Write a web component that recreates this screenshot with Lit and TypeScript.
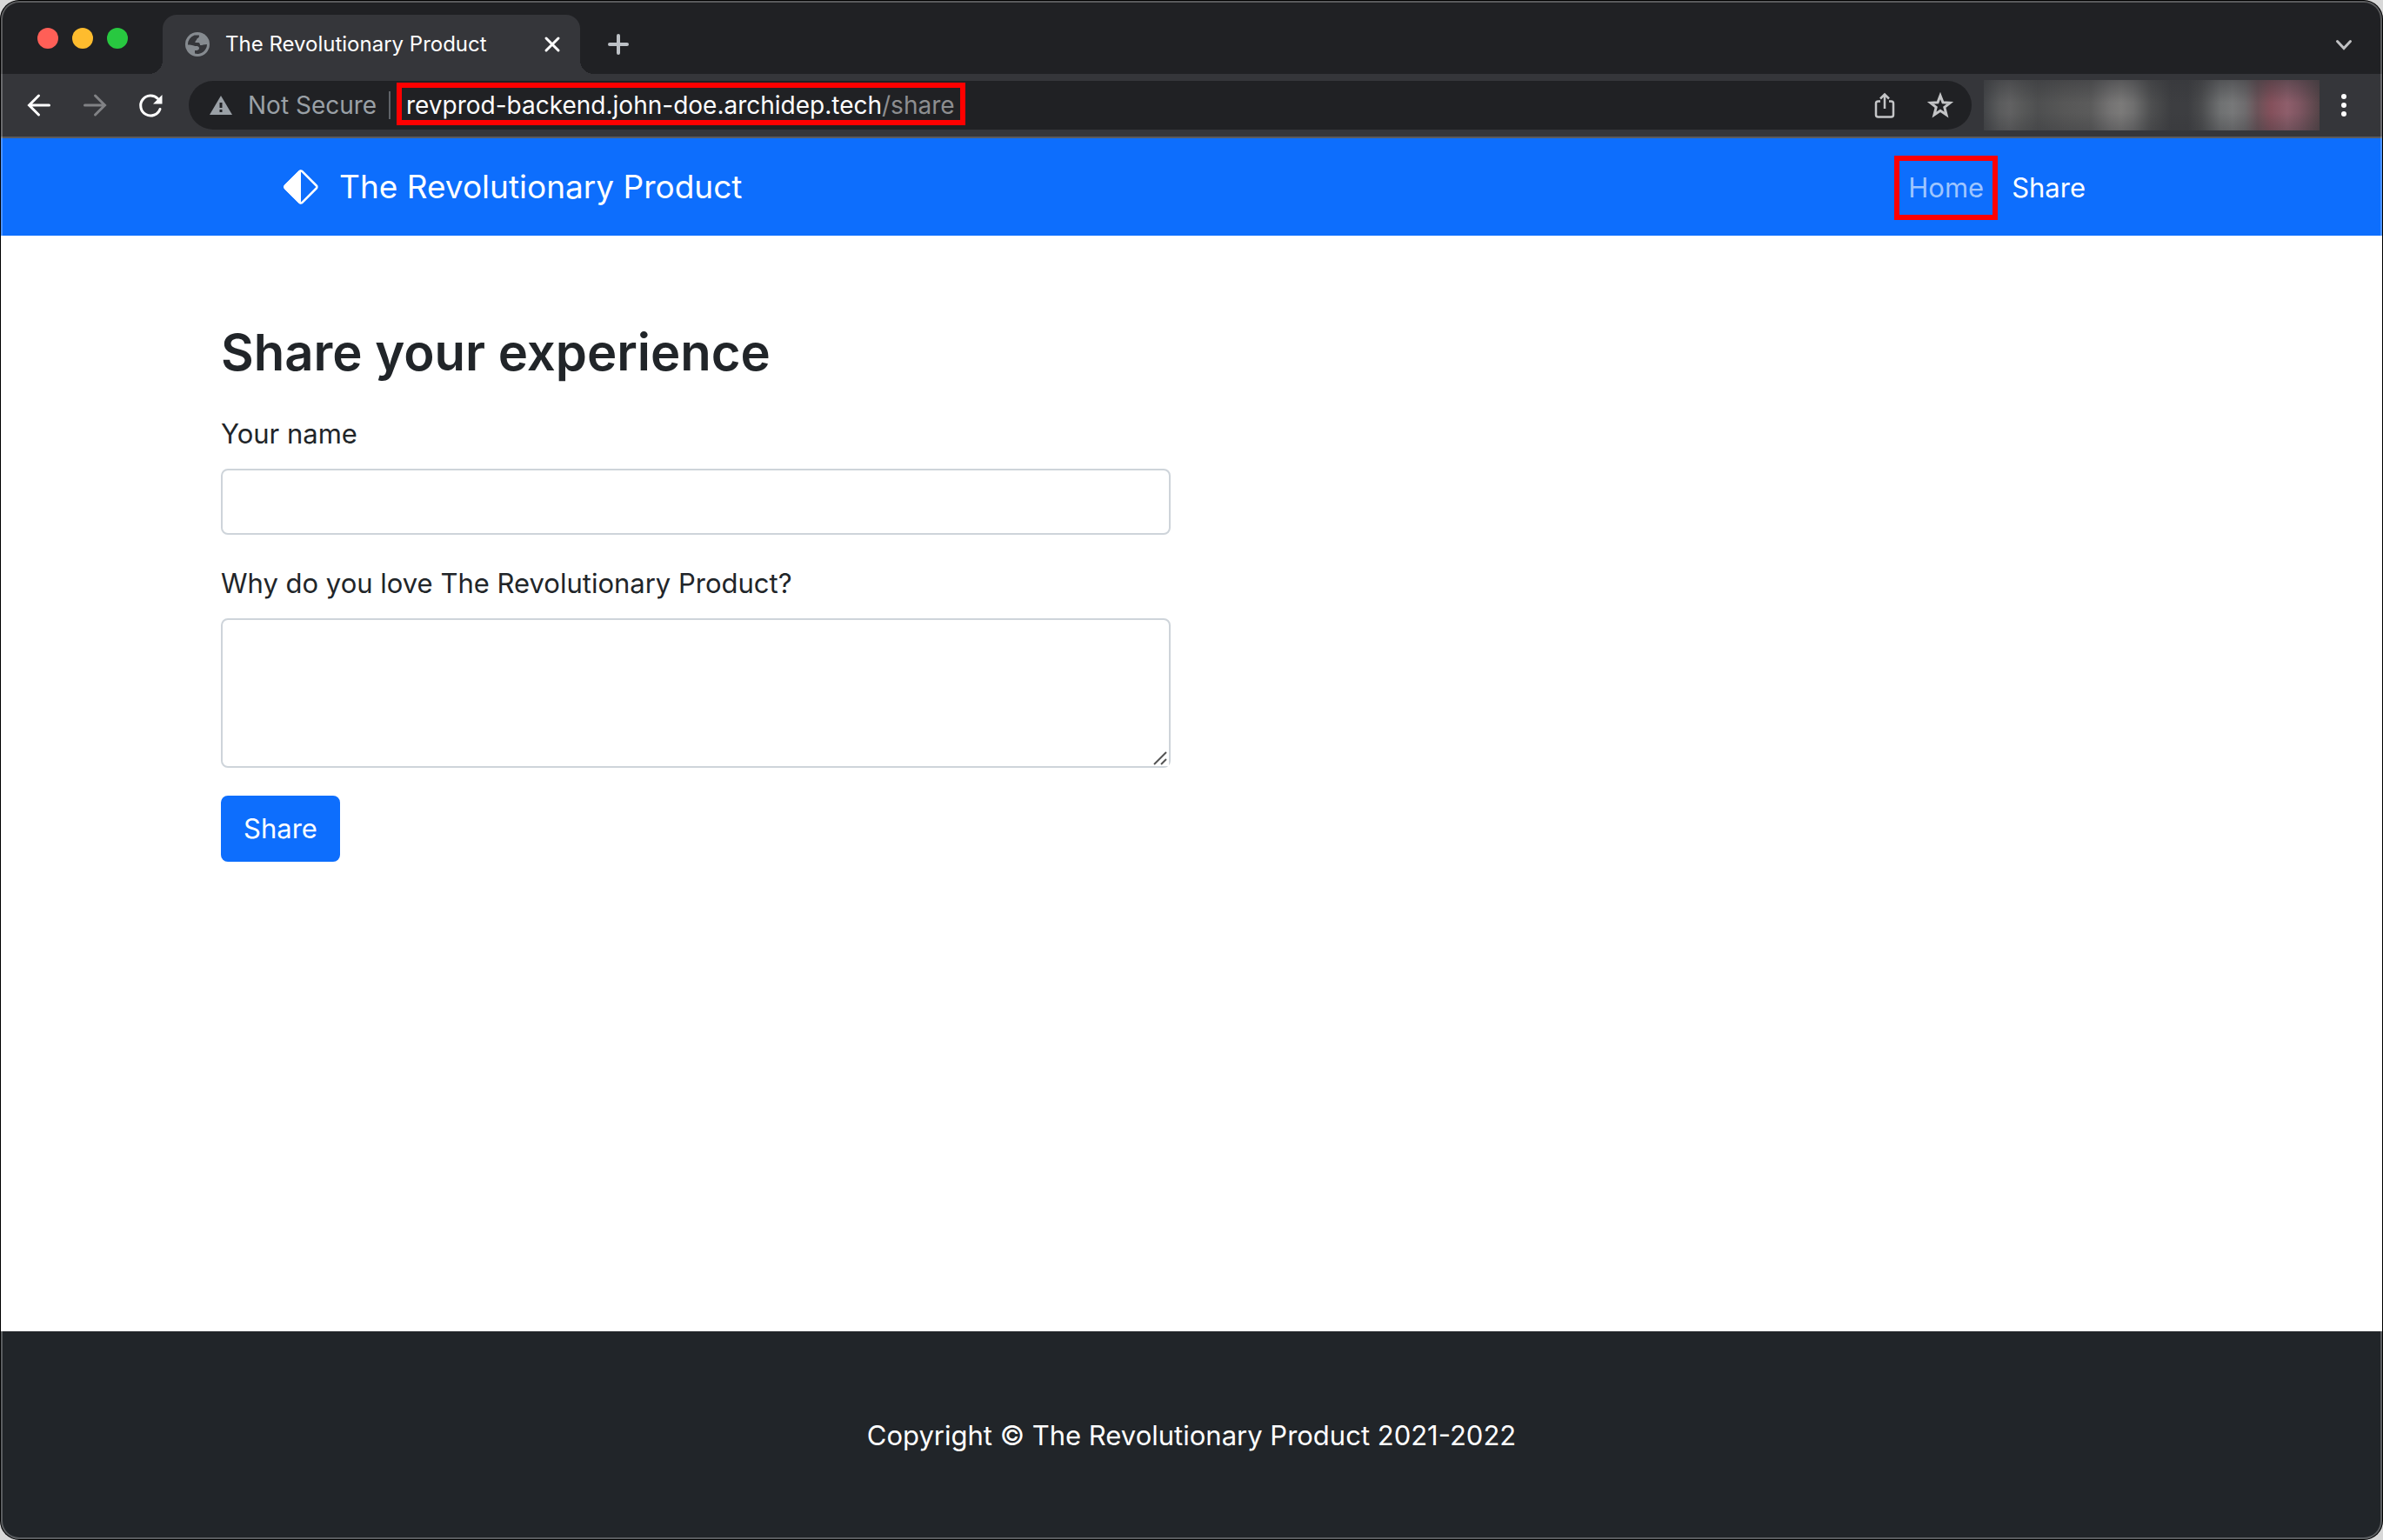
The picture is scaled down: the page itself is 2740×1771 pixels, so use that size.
import { LitElement, html, css, svg } from "lit";
import { customElement } from "lit/decorators.js";

const stroke = (d: string, w = 3) =>
  svg`<path d=${d} fill="none" stroke="currentColor" stroke-width=${w} stroke-linecap="round" />`;

@customElement("browser-chrome")
export class BrowserChrome extends LitElement {
  static styles = css`
    :host {
      display: block;
      color: #fff;
    }
    svg {
      display: block;
      flex: none;
    }
    button {
      appearance: none;
      border: 0;
      padding: 0;
      margin: 0;
      background: none;
      color: inherit;
      font: inherit;
      flex: none;
    }
    .strip {
      display: flex;
      align-items: flex-end;
      height: 85px;
      box-sizing: border-box;
      padding: 3px 29px 0 43px;
      background: #202124;
    }
    .lights {
      display: flex;
      gap: 16px;
      align-self: flex-start;
      padding-top: 29px;
      margin-right: 40px;
    }
    .light {
      width: 24px;
      height: 24px;
      border-radius: 50%;
    }
    .red {
      background: #ff5f57;
    }
    .yellow {
      background: #febc2e;
    }
    .green {
      background: #28c840;
    }
    .tab {
      position: relative;
      display: flex;
      align-items: center;
      width: 480px;
      height: 68px;
      box-sizing: border-box;
      padding: 0 20px 0 26px;
      background: #35363a;
      border-radius: 16px 16px 0 0;
      font-size: 24px;
      line-height: 32px;
    }
    .tab::before,
    .tab::after {
      content: "";
      position: absolute;
      bottom: 0;
      width: 16px;
      height: 16px;
    }
    .tab::before {
      right: 100%;
      background: radial-gradient(circle at 0 0, transparent 16px, #35363a 16px);
    }
    .tab::after {
      left: 100%;
      background: radial-gradient(circle at 100% 0, transparent 16px, #35363a 16px);
    }
    .tab-title {
      flex: 1;
      margin-left: 18px;
      white-space: nowrap;
    }
    .new-tab {
      height: 68px;
      display: flex;
      align-items: center;
      margin-left: 30px;
      color: #bdc1c6;
    }
    .tab-search {
      height: 68px;
      display: flex;
      align-items: center;
      margin-left: auto;
      color: #c0c1c3;
    }
    .toolbar {
      display: flex;
      align-items: center;
      height: 74px;
      box-sizing: border-box;
      padding: 0 27px 0 29px;
      background: #35363a;
      border-bottom: 2px solid #5b5c5f;
    }
    .history {
      display: flex;
      gap: 32px;
      margin-right: 28px;
    }
    .disabled {
      color: #818285;
    }
    .omnibox {
      flex: 1;
      display: flex;
      align-items: center;
      height: 56px;
      box-sizing: border-box;
      padding: 0 20px 0 24px;
      border-radius: 28px;
      background: #202124;
      font-size: 28px;
      line-height: 34px;
      white-space: nowrap;
    }
    .insecure {
      margin-left: 18px;
      color: #9aa0a6;
    }
    .grey {
      color: #9aa0a6;
    }
    .divider {
      width: 2px;
      height: 32px;
      margin: 0 7px 0 auto;
      background: #5f6368;
    }
    .security {
      display: flex;
      align-items: center;
      width: 215px;
    }
    .address {
      display: block;
      width: 654px;
      box-sizing: border-box;
      margin-bottom: 3px;
      padding: 3px 5px 0;
      border: 6px solid #f00;
      color: #fff;
      text-decoration: none;
    }
    .path {
      color: #8d8e90;
    }
    .actions {
      display: flex;
      gap: 34px;
      margin-left: auto;
      color: #c4c5c7;
    }
    .extensions {
      width: 386px;
      height: 58px;
      margin: 0 14px;
      background:
        linear-gradient(#35363a80, #35363a00 45%, #35363a00 65%, #35363a50),
        linear-gradient(
          90deg,
          #434548,
          #5a5b5c 18px,
          #616162 30px,
          #585959 44px,
          #4e4f50 62px,
          #575757 93px,
          #5b5b5b 123px,
          #747373 145px,
          #7b7a79 158px,
          #6f6f6f 172px,
          #4e4f50 192px,
          #3d3e41 215px,
          #3d3e41 235px,
          #4a4b4d 250px,
          #6f7172 272px,
          #777879 286px,
          #6e6c6e 300px,
          #6b5258 315px,
          #84505b 330px,
          #8e5e6b 349px,
          #7f5662 362px,
          #554448
        );
    }
  `;

  render() {
    return html`
      <div class="strip">
        <div class="lights">
          <span class="light red"></span>
          <span class="light yellow"></span>
          <span class="light green"></span>
        </div>
        <div class="tab">
          <svg width="28" height="28" viewBox="0 0 28 28" aria-hidden="true">
            <circle cx="14" cy="14" r="14" fill="#868b90" />
            <path
              d="M3 14.5A11 11 0 0 1 10.500 3.600H16c0 2-.5 3.400-2.500 3.900C13 10 11 10 11.500 12h3.500c1.500 0 2 1.500 2 3 2 .5 4-1 8-1a11 11 0 0 1-14 10.500V21c3 0 5-.5 5-2.500s-1.500-2.500-4-2.500C10 16 9 14.500 3 14.500z"
              fill="#35363a"
            />
          </svg>
          <span class="tab-title">The Revolutionary Product</span>
          <button aria-label="Close tab">
            <svg width="24" height="24" viewBox="0 0 24 24">${stroke("M5 5 19 19M19 5 5 19")}</svg>
          </button>
        </div>
        <button class="new-tab" aria-label="New tab">
          <svg width="28" height="28" viewBox="0 0 28 28">${stroke("M14 4v20M4 14h20", 4)}</svg>
        </button>
        <button class="tab-search" aria-label="Search tabs">
          <svg width="32" height="24" viewBox="0 0 32 24">${stroke("M8.500 8.500 16 16.500 23.500 8.500")}</svg>
        </button>
      </div>
      <div class="toolbar">
        <div class="history">
          <button aria-label="Back">
            <svg width="32" height="32" viewBox="0 0 32 32">${stroke("M27.500 16H5M15.500 5 4.500 16 15.500 27")}</svg>
          </button>
          <button class="disabled" aria-label="Forward" disabled>
            <svg width="32" height="32" viewBox="0 0 32 32">${stroke("M4.500 16H27M16.500 5 27.500 16 16.500 27")}</svg>
          </button>
          <button aria-label="Reload">
            <svg width="32" height="32" viewBox="0 0 32 32">
              ${stroke("M27 20.500A11.500 11.500 0 1 1 24.500 8.500")}
              <path d="M29.500 4V14.500H19z" fill="currentColor" />
            </svg>
          </button>
        </div>
        <div class="omnibox">
          <div class="security">
            <svg class="grey" width="26" height="22" viewBox="0 0 26 22" aria-hidden="true">
              <path d="M13 0 26 22H0z" fill="currentColor" />
              <path d="M13 8v6M13 16v3" stroke="#202124" stroke-width="3" />
            </svg>
            <span class="insecure">Not Secure</span>
            <span class="divider"></span>
          </div>
          <a class="address" href="#share">revprod-backend.john-doe.archidep.tech<span class="path">/share</span></a>
          <div class="actions">
            <button aria-label="Share this page">
              <svg width="28" height="32" viewBox="0 0 28 32">
                <path
                  d="M9 11.500H6.500a2.500 2.500 0 0 0-2.500 2.500V27a2.500 2.500 0 0 0 2.500 2.500H21.500a2.500 2.500 0 0 0 2.500-2.500V14a2.500 2.500 0 0 0-2.500-2.500H19M14 20V4M9 8.500 14 3.500 19 8.500"
                  fill="none" stroke="currentColor" stroke-width="2.500"
                />
              </svg>
            </button>
            <button aria-label="Bookmark this page">
              <svg width="32" height="32" viewBox="0 0 32 32">
                <path
                  d="M16 5 19 12.800 27.200 13.300 20.800 18.400 23 27 16 22.200 9 27 11.200 18.400 4.800 13.300 13 12.800z"
                  fill="none" stroke="currentColor" stroke-width="3"
                />
              </svg>
            </button>
          </div>
        </div>
        <div class="extensions"></div>
        <button aria-label="Menu">
          <svg width="32" height="32" viewBox="0 0 32 32">
            <g fill="#fff"><circle cx="14" cy="6" r="3" /><circle cx="14" cy="16" r="3" /><circle cx="14" cy="26" r="3" /></g>
          </svg>
        </button>
      </div>
    `;
  }
}

@customElement("app-root")
export class AppRoot extends LitElement {
  static styles = css`
    :host {
      display: block;
      background: #d8d8d8;
      font-family: Inter, "Liberation Sans", sans-serif;
    }
    .window {
      position: relative;
      display: flex;
      flex-direction: column;
      min-height: 100vh;
      box-sizing: border-box;
      border-radius: 22px;
      overflow: hidden;
      background: #fff;
      color: #212529;
      font-size: 31px;
      line-height: 48px;
    }
    .window::after {
      content: "";
      position: absolute;
      inset: 0;
      border-radius: 22px;
      box-shadow: inset 0 0 0 1px #000, inset 0 0 0 3px rgba(255, 255, 255, 0.26);
      pointer-events: none;
    }
    .container {
      width: 100%;
      max-width: 2280px;
      margin: 0 auto;
      box-sizing: border-box;
    }
    .navbar {
      background: #0d6efd;
    }
    .nav-row {
      display: flex;
      align-items: center;
      justify-content: space-between;
      padding: 16px 96px;
      min-height: 112px;
    }
    .brand {
      display: flex;
      align-items: center;
      gap: 24px;
      color: #fff;
      font-size: 37px;
      line-height: 60px;
      text-decoration: none;
    }
    .links {
      display: flex;
      align-items: center;
      padding-top: 2px;
    }
    .link {
      padding: 7px 10px;
      border: 6px solid transparent;
      color: #fff;
      text-decoration: none;
    }
    .link.marked {
      border-color: #f00;
      color: #9ec5fe;
    }
    .main {
      flex: 1;
      padding: 96px 24px;
    }
    .form {
      width: calc(50% - 24px);
    }
    h1 {
      margin: 0 0 32px;
      font-size: 58px;
      line-height: 76px;
      font-weight: 600;
    }
    .field {
      margin-bottom: 32px;
    }
    label {
      display: block;
      margin-bottom: 16px;
    }
    .control {
      display: block;
      width: 100%;
      height: 76px;
      box-sizing: border-box;
      padding: 12px 24px;
      border: 2px solid #ced4da;
      border-radius: 8px;
      background: #fff;
      color: inherit;
      font: inherit;
    }
    .area-box {
      position: relative;
    }
    .area {
      height: 172px;
      resize: vertical;
    }
    .area::-webkit-resizer {
      background: #fff;
    }
    .grip {
      position: absolute;
      right: 4px;
      bottom: 3px;
      pointer-events: none;
    }
    .submit {
      appearance: none;
      display: block;
      padding: 12px 24px;
      border: 2px solid #0d6efd;
      border-radius: 8px;
      background: #0d6efd;
      color: #fff;
      font: inherit;
    }
    .footer {
      padding: 96px 24px;
      background: #212529;
      color: #fff;
      text-align: center;
    }
    .footer p {
      margin: 0;
    }
  `;

  render() {
    return html`
      <div class="window">
        <browser-chrome></browser-chrome>
        <nav class="navbar">
          <div class="container nav-row">
            <a class="brand" href="#home">
              <svg width="40" height="40" viewBox="0 0 40 40" aria-hidden="true">
                <path d="M18.500 2.200 2.200 18.500a2.100 2.100 0 0 0 0 3L18.500 37.800a2.100 2.100 0 0 0 3 0L37.800 21.500a2.100 2.100 0 0 0 0-3L21.500 2.200a2.100 2.100 0 0 0-3 0z" fill="none" stroke="#fff" stroke-width="2.500" />
                <path d="M20 .4a3.500 3.500 0 0 0-2.500 1L1.300 17.500a3.500 3.500 0 0 0 0 5L17.500 38.600a3.500 3.500 0 0 0 2.500 1z" fill="#fff" />
              </svg>
              The Revolutionary Product
            </a>
            <div class="links">
              <a class="link marked" href="#home">Home</a>
              <a class="link" href="#share">Share</a>
            </div>
          </div>
        </nav>
        <main class="container main">
          <form class="form" @submit=${(e: Event) => e.preventDefault()}>
            <h1>Share your experience</h1>
            <div class="field">
              <label for="name">Your name</label>
              <input class="control" id="name" type="text" />
            </div>
            <div class="field">
              <label for="reason">Why do you love The Revolutionary Product?</label>
              <div class="area-box">
                <textarea class="control area" id="reason"></textarea>
                <svg class="grip" width="16" height="16" viewBox="0 0 16 16" aria-hidden="true">
                  <path d="M1 15 15 1M9 15 15 9" stroke="#555" stroke-width="2" />
                </svg>
              </div>
            </div>
            <button class="submit" type="submit">Share</button>
          </form>
        </main>
        <footer class="footer">
          <p>Copyright © The Revolutionary Product 2021-2022</p>
        </footer>
      </div>
    `;
  }
}
